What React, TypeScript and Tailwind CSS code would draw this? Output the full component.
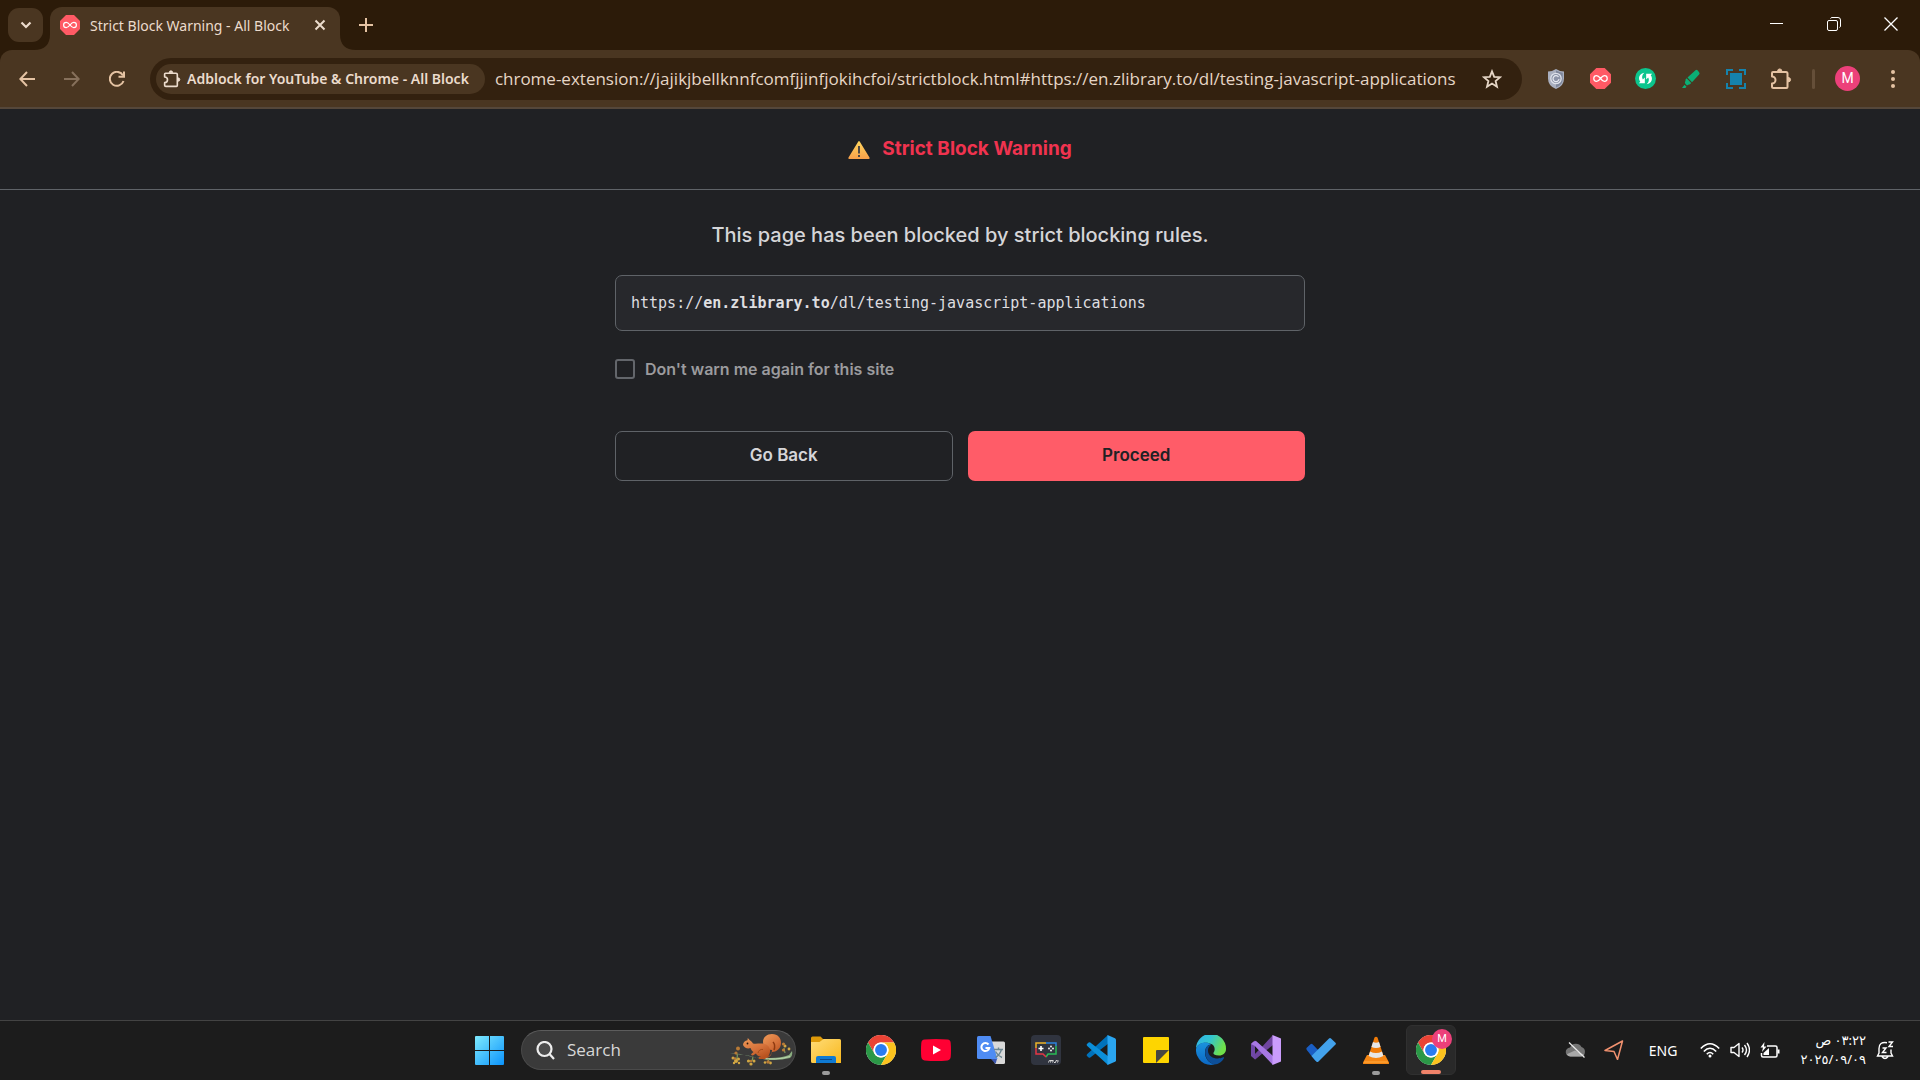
import type { ReactNode } from "react";

const icon = "block shrink-0";

function StopSign({ className }: { className: string }) {
  return (
    <svg viewBox="0 0 20 20" className={`${icon} ${className}`} aria-hidden="true">
      <path d="M6 0h8l6 6v8l-6 6H6l-6-6V6z" fill="#ff5a65" />
      <path
        d="M10 10C8.600 8.200 7.700 7.300 6.300 7.300a2.700 2.700 0 0 0 0 5.400c1.400 0 2.300-.9 3.700-2.700s2.300-2.700 3.700-2.700a2.700 2.700 0 0 1 0 5.400c-1.400 0-2.300-.9-3.700-2.700z"
        fill="none"
        stroke="#fff"
        strokeWidth="1.200"
      />
    </svg>
  );
}

function Puzzle({ className }: { className: string }) {
  return (
    <svg viewBox="0 0 22 22" className={`${icon} ${className}`} fill="none" stroke="currentColor" strokeWidth="2" strokeLinejoin="round" aria-hidden="true">
      <path d="M3 4h13q1.500 0 1.500 1.500V19q0 1-1 1H3.500Q2 20 2 18.500v-3a3.300 3.300 0 0 0 0-7V5q0-1 1-1z" />
      <path d="M7.500 3.500a2.200 2.600 0 0 1 4.400 0zM18 9.500a2.600 2.200 0 0 1 0 4.400z" fill="currentColor" strokeWidth="1" />
    </svg>
  );
}

function ChromeLogo() {
  return (
    <svg viewBox="0 0 48 48" className={`${icon} size-[30px]`} aria-hidden="true">
      <circle cx="24" cy="24" r="24" fill="#fff" />
      <path d="M3.200 12A24 24 0 0 1 44.800 12H24a12 12 0 0 0-10.400 18z" fill="#ea4335" />
      <path d="M3.200 12A24 24 0 0 0 24 48l10.400-18a12 12 0 0 1-20.800 0z" fill="#2b9847" />
      <path d="M44.800 12A24 24 0 0 1 24 48l10.400-18A12 12 0 0 0 24 12z" fill="#fcc31e" />
      <circle cx="24" cy="24" r="12" fill="#fff" />
      <circle cx="24" cy="24" r="9.500" fill="#2a7cf0" />
    </svg>
  );
}

function Squirrel() {
  return (
    <svg viewBox="0 0 64 34" className="block h-[34px] w-16" aria-hidden="true">
      <defs>
        <linearGradient id="fur" x1="0" y1="0" x2="0.600" y2="1">
          <stop offset="0" stopColor="#ee9a58" />
          <stop offset="0.600" stopColor="#d5713a" />
          <stop offset="1" stopColor="#b9531f" />
        </linearGradient>
      </defs>
      <path d="M1 20.500q9-.5 17 2t20 2.500q14 .5 22-3l3-4q1 5-2 7-12 3-24 1.500-12-2.500-20-4.500-8-1-16-1.500z" fill="#8aae80" />
      <path d="M30 25q18 2.500 31-1.500" stroke="#b9d3ac" strokeWidth="1" fill="none" />
      <path d="M8 21q1 3-1 6M24 24l-1 4M39 26l1 3M56 20l-1-5" stroke="#7d9a5a" strokeWidth="1.200" fill="none" />
      <path d="M35 25c5-1 8-3 8-8-5 0-9-3-9-8 0-5 4-8 9-8 6 0 9 4 9 9 0 6-5 9-9 9-1 4-3 6-7 6z" fill="url(#fur)" />
      <path d="M45 17c1-3 1-6-1-8" stroke="#8f3a10" strokeWidth="1.500" fill="none" />
      <path d="M14 12c0-2.500 2-4.500 4.500-4.800L18.800 5l2 2.200c1.700.8 2.300 2 3.200 3.300 4 1 10-1.500 14.500 2 3.500 2.500 3 7.500 1 10.500L36 26h-6c-1-1 0-2 2-2.300-3-.2-4.500-1.700-5-3.200-1.500.5-2 2-4 2l-1-1.200 2.500-2.300c-1.500-1-2.500-2.500-3-4-3 1.200-6.500-.5-7.500-3z" fill="url(#fur)" />
      <path d="M29 20q1-4 5-3.500" stroke="#a54b19" strokeWidth="1" fill="none" />
      <circle cx="18.500" cy="10.500" r="0.900" fill="#2a1509" />
      <g fill="#d2a743">
        <circle cx="4" cy="25" r="1.500" /><circle cx="7" cy="28" r="2" /><circle cx="9.500" cy="26" r="1.500" /><circle cx="5" cy="30" r="1.200" /><circle cx="10" cy="30" r="1.200" />
        <circle cx="19.500" cy="28" r="1.600" /><circle cx="22" cy="31" r="1.600" /><circle cx="25" cy="28" r="1.500" />
        <circle cx="36" cy="29.500" r="1.300" /><circle cx="41.500" cy="30" r="1.400" />
        <circle cx="56" cy="13" r="1.500" /><circle cx="60" cy="16" r="1.400" />
      </g>
      <g fill="#b87a36">
        <circle cx="9" cy="15.500" r="2" /><circle cx="7" cy="20" r="1.600" /><circle cx="6" cy="25.500" r="1.300" /><circle cx="22" cy="28" r="1.200" />
        <circle cx="39" cy="29" r="1.700" /><circle cx="54.500" cy="11" r="1.600" /><circle cx="54.500" cy="17" r="1.600" />
      </g>
    </svg>
  );
}

function Task({ label, children, running, active }: { label: string; children: ReactNode; running?: boolean; active?: boolean }) {
  return (
    <button
      aria-label={label}
      className={
        active
          ? "relative flex size-[50px] items-center justify-center rounded-md border border-[#303030] bg-[#292929]"
          : "relative flex size-[50px] items-center justify-center rounded-md"
      }
    >
      {children}
      {running && <span className="absolute bottom-0 left-1/2 h-1 w-2 -translate-x-1/2 rounded-full bg-[#9a9a9a]" />}
      {active && <span className="absolute bottom-0 left-1/2 h-1 w-5 -translate-x-1/2 rounded-full bg-[#f0836a]" />}
    </button>
  );
}

function TabStrip() {
  return (
    <div className="flex h-[50px] text-[#ecdccd]">
      <button aria-label="Search tabs" className="mt-2 ml-2 flex h-[34px] w-[35px] items-center justify-center rounded-[11px] bg-[#4a3621]">
        <svg viewBox="0 0 12 8" className="h-2 w-3" fill="none" stroke="currentColor" strokeWidth="2.200" aria-hidden="true">
          <path d="M1.500 1.500 6 6l4.500-4.500" />
        </svg>
      </button>
      <div className="relative mt-[7px] ml-[7px] flex h-[43px] w-[290px] items-center rounded-t-xl bg-[#4a3621] pr-[13px] pb-[7px] pl-2.5">
        <svg viewBox="0 0 16 16" className="absolute bottom-0 -left-4 size-4" aria-hidden="true"><path d="M16 0v16H0Q16 16 16 0z" fill="#4a3621" /></svg>
        <svg viewBox="0 0 16 16" className="absolute -right-4 bottom-0 size-4" aria-hidden="true"><path d="M0 0v16h16Q0 16 0 0z" fill="#4a3621" /></svg>
        <StopSign className="size-5" />
        <span className="ml-2.5 flex-1 whitespace-nowrap text-[14px]">Strict Block Warning - All Block</span>
        <button aria-label="Close tab" className="flex size-[14px] items-center justify-center">
          <svg viewBox="0 0 12 12" className="size-3" stroke="currentColor" strokeWidth="2" aria-hidden="true">
            <path d="m1.500 1.500 9 9m0-9-9 9" />
          </svg>
        </button>
      </div>
      <button aria-label="New tab" className="ml-4 flex w-5 items-center justify-center text-[#e5c3a3]">
        <svg viewBox="0 0 14 14" className="size-[14px]" stroke="currentColor" strokeWidth="2" aria-hidden="true">
          <path d="M7 0v14M0 7h14" />
        </svg>
      </button>
      <div className="ml-auto flex h-12 pr-px text-white">
        <button aria-label="Minimize" className="flex w-[57px] items-center justify-center">
          <svg viewBox="0 0 14 14" className="size-[14px]" stroke="currentColor" aria-hidden="true"><path d="M0 6.500h13" /></svg>
        </button>
        <button aria-label="Restore" className="flex w-[57px] items-center justify-center">
          <svg viewBox="0 0 14 14" className="size-[14px]" fill="none" stroke="currentColor" aria-hidden="true">
            <rect x="0.500" y="3.500" width="10" height="10" rx="1.500" />
            <path d="M3.500 1.500q.5-1 1.500-1h6q2.500 0 2.500 2.500v6q0 1-1 1.500" />
          </svg>
        </button>
        <button aria-label="Close" className="flex w-[57px] items-center justify-center">
          <svg viewBox="0 0 14 14" className="size-[14px]" stroke="currentColor" strokeWidth="1.300" aria-hidden="true"><path d="m.5.5 13 13m0-13-13 13" /></svg>
        </button>
      </div>
    </div>
  );
}

const navButton = "flex w-[45px] shrink-0 items-center justify-center";

function Toolbar() {
  return (
    <div className="flex h-[59px] items-center rounded-t-xl border-b-2 border-[#55473a] bg-[#4a3621] pl-1 text-[#e5c3a3]">
      <button aria-label="Back" className={navButton}>
        <svg viewBox="0 0 16 16" className="size-4" fill="none" stroke="currentColor" strokeWidth="2" aria-hidden="true"><path d="M16 8H1.500M8 1 1.300 8 8 15" /></svg>
      </button>
      <button aria-label="Forward" className={`${navButton} text-[#86705b]`}>
        <svg viewBox="0 0 16 16" className="size-4" fill="none" stroke="currentColor" strokeWidth="2" aria-hidden="true"><path d="M0 8h14.500M8 1l6.700 7L8 15" /></svg>
      </button>
      <button aria-label="Reload" className={navButton}>
        <svg viewBox="0 0 16 16" className="size-4" fill="none" stroke="currentColor" strokeWidth="2" aria-hidden="true">
          <path d="M14.500 10A7 7 0 1 1 14 4.500" /><path d="M15 .5v5.300H9.500" />
        </svg>
      </button>
      <div className="ml-[11px] flex h-[42px] min-w-0 flex-1 items-center rounded-full bg-[#33210f] pr-5 pl-1.5 text-[#e6d6c6]">
        <button className="flex h-[30px] shrink-0 items-center gap-1.5 rounded-full bg-[#4a3621] pr-4 pl-[7px] text-[14px] font-semibold whitespace-nowrap text-[#ecdccd]">
          <Puzzle className="size-[18px]" />
          Adblock for YouTube &amp; Chrome - All Block
        </button>
        <input
          aria-label="Address"
          className="ml-2.5 min-w-0 flex-1 bg-transparent font-['Open_Sans',sans-serif] text-[17px] outline-none"
          defaultValue="chrome-extension://jajikjbellknnfcomfjjinfjokihcfoi/strictblock.html#https://en.zlibrary.to/dl/testing-javascript-applications"
        />
        <button aria-label="Bookmark">
          <svg viewBox="0 0 20 20" className="size-5" fill="none" stroke="currentColor" strokeWidth="1.800" aria-hidden="true">
            <path d="m10 2.300 2.200 5.500 5.900.4-4.500 3.800 1.400 5.700-5-3.100-5 3.100L6.400 12 1.900 8.200l5.900-.4z" />
          </svg>
        </button>
      </div>
      <div className="ml-[11px] flex items-center">
        <button aria-label="Shield" className={navButton}>
          <svg viewBox="0 0 18 20" className="h-5 w-[18px]" aria-hidden="true">
            <path d="M9 0q4 2.500 8 2.500v7Q17 17 9 20 1 17 1 9.500v-7Q5 2.500 9 0z" fill="#a9afbf" />
            <path d="M9 1.500q3.500 2 6.800 2.200v6Q15.800 16 9 18.600z" fill="#7f879b" />
            <circle cx="9" cy="9.500" r="5.200" fill="#8d94a8" stroke="#dfe2ea" strokeWidth="1.300" />
            <path d="M11.500 8A3 3 0 1 0 12 10" fill="none" stroke="#e8ebf2" strokeWidth="1.200" />
          </svg>
        </button>
        <button aria-label="All Block" className={navButton}><StopSign className="size-[21px]" /></button>
        <button aria-label="Sync" className={navButton}>
          <svg viewBox="0 0 22 22" className="size-[21px]" aria-hidden="true">
            <circle cx="11" cy="11" r="11" fill="#0cc58d" />
            <path d="M9.800 5C4.500 5.500 2.800 11 5.500 14.300L4 16h6.300v-6L8.200 12C6.800 10 7.500 6.800 9.800 5z" fill="#fff" />
            <path d="M12.200 17c5.300-.5 7-6 4.300-9.300L18 6h-6.300v6l2.100-2c1.400 2 .7 5.200-1.600 7z" fill="#fff" />
          </svg>
        </button>
        <button aria-label="Highlighter" className={navButton}>
          <svg viewBox="0 0 20 20" className="size-5" fill="#0bae75" aria-hidden="true">
            <path d="M14.500 1.200q1-1 2 0l1.600 2q1 1.200 0 2.300L11 13.300 6.500 8.500z" />
            <path d="m5.700 9.300 4.500 4.800-1.200 1.200q-2 .2-3 1.200l-1.500-1.600q-1-1.200-.5-1.800.8-1.400.5-2.600zM3.500 15.800l2 2L4.300 19H1z" />
          </svg>
        </button>
        <button aria-label="Capture" className={navButton}>
          <svg viewBox="0 0 20 20" className="size-5" aria-hidden="true">
            <rect x="4" y="4" width="12" height="12" fill="#1583ad" />
            <path d="M1 6V1h6M13 1h6v5M19 14v5h-6M7 19H1v-5" fill="none" stroke="#1583ad" strokeWidth="2" />
          </svg>
        </button>
        <button aria-label="Extensions" className={navButton}><Puzzle className="size-[22px]" /></button>
        <span className="mr-2 ml-[9px] h-5 w-[3px] rounded-full bg-[#654f39]" />
        <button aria-label="Profile" className={`${navButton} ml-0.5`}>
          <span className="flex size-[25px] items-center justify-center rounded-full bg-[#ec407a] font-[Roboto] text-[14px] text-white">M</span>
        </button>
        <button aria-label="Menu" className={navButton}>
          <svg viewBox="0 0 4 18" className="h-[18px] w-1" fill="currentColor" aria-hidden="true">
            <circle cx="2" cy="2" r="2" /><circle cx="2" cy="9" r="2" /><circle cx="2" cy="16" r="2" />
          </svg>
        </button>
        <span className="w-[5px]" />
      </div>
    </div>
  );
}

function Page() {
  return (
    <main className="flex-1 bg-[#202124] font-[Inter,sans-serif]">
      <header className="flex h-[81px] items-center justify-center gap-3 border-b border-[#5f6368]">
        <svg viewBox="0 0 22 20" className="mt-0.5 h-5 w-[22px]" aria-hidden="true">
          <defs>
            <linearGradient id="warn" x1="0" y1="0" x2="0" y2="1">
              <stop offset="0" stopColor="#ffd75e" /><stop offset="1" stopColor="#f9a04a" />
            </linearGradient>
          </defs>
          <path d="M10.300 1.500q.7-1.200 1.400 0l9.800 16q.6 1.500-.9 1.500H1.400Q-.1 19 .5 17.500z" fill="url(#warn)" />
          <path d="M11 6v7.500M11 15v2" stroke="#3d3d44" strokeWidth="1.800" />
        </svg>
        <h1 className="text-[19px] font-bold text-[#f0334f]">Strict Block Warning</h1>
      </header>
      <section className="mx-auto w-full max-w-[690px] pt-[30px]">
        <h2 className="text-center text-[20px] leading-[30px] font-medium text-[#d5d5d8]">This page has been blocked by strict blocking rules.</h2>
        <p className="mt-[25px] flex h-14 items-center rounded-[7px] border border-[#5f6368] bg-[#27282c] px-[15px] font-['DejaVu_Sans_Mono',monospace] text-[15px] text-[#dedee0]">
          https://<b>en.zlibrary.to</b>/dl/testing-javascript-applications
        </p>
        <label className="mt-7 flex items-center gap-2.5 text-[16px] leading-5 font-semibold text-[#9b9b9e]">
          <input type="checkbox" className="size-5 appearance-none rounded-[3px] border-2 border-[#63666b]" />
          Don&#39;t warn me again for this site
        </label>
        <div className="mt-[52px] grid grid-cols-2 gap-[15px] text-[17px] font-semibold">
          <button className="h-[50px] rounded-[7px] border border-[#5f6368] text-[#d5d5d8]">Go Back</button>
          <button className="h-[50px] rounded-[7px] bg-[#ff5c68] text-[#202124]">Proceed</button>
        </div>
      </section>
    </main>
  );
}

function Taskbar() {
  return (
    <footer className="grid h-[60px] grid-cols-[1fr_auto_1fr] items-center border-t border-[#434343] bg-[#1c1c1c] pb-px text-white">
      <span />
      <nav aria-label="Taskbar" className="flex items-center gap-[5px]">
        <Task label="Start">
          <svg viewBox="0 0 29 29" className={`${icon} size-[29px]`} aria-hidden="true">
            <defs>
              <linearGradient id="win" x1="0" y1="0" x2="1" y2="1" >
                <stop offset="0" stopColor="#7eeafe" /><stop offset="1" stopColor="#0b93fb" />
              </linearGradient>
              <mask id="panes">
                <path d="M1 0h13v14H0V1q0-1 1-1zM15 0h13q1 0 1 1v13H15zM0 15h14v14H1q-1 0-1-1zM15 15h14v13q0 1-1 1H15z" fill="#fff" />
              </mask>
            </defs>
            <rect width="29" height="29" fill="url(#win)" mask="url(#panes)" />
          </svg>
        </Task>
        <div className="ml-0.5 flex h-10 w-[275px] items-center rounded-full border border-[#4a4a4a] border-t-[#5c5c5c] bg-[#3a3a3a] pr-0.5 pl-3.5">
          <svg viewBox="0 0 19 19" className="size-[19px]" fill="none" stroke="#ededed" strokeWidth="2.200" aria-hidden="true">
            <circle cx="8.500" cy="8" r="7" fill="#4c4c4c" /><path d="m13.500 13 4.500 5" />
          </svg>
          <input aria-label="Search" placeholder="Search" className="ml-3 min-w-0 flex-1 bg-transparent font-['Open_Sans',sans-serif] text-[17px] outline-none placeholder:text-[#d8d8d8]" />
          <Squirrel />
        </div>
        <Task label="File Explorer" running>
          <svg viewBox="0 0 30 28" className={`${icon} h-7 w-[30px]`} aria-hidden="true">
            <defs>
              <linearGradient id="folder" x1="0" y1="0" x2="1" y2="1"><stop offset="0" stopColor="#ffdc77" /><stop offset="1" stopColor="#f9b81d" /></linearGradient>
            </defs>
            <path d="M0 2q0-1.500 1.500-1.500h8L13 4l-4 4H0z" fill="#de9a09" />
            <path d="M0 6h8.500l4-3H28.500Q30 3 30 4.500V27H1.500Q0 27 0 25.500z" fill="url(#folder)" />
            <path d="M5 27v-5q0-2 2-2h16q2 0 2 2v5z" fill="#0f7ad3" />
            <path d="M9 23.500h12" stroke="#0b4a8d" />
          </svg>
        </Task>
        <Task label="Chrome"><ChromeLogo /></Task>
        <Task label="YouTube">
          <svg viewBox="0 0 30 22" className={`${icon} h-[22px] w-[30px]`} aria-hidden="true">
            <path d="M3.500.6Q15-.5 26.500.6 29.500 1 29.700 4q.6 7 0 14-.3 3-3.200 3.400-11.500 1.100-23 0Q.6 21 .3 18q-.6-7 0-14Q.6 1 3.500.6z" fill="#ff0033" />
            <path d="m12 6.500 8 4.500-8 4.500z" fill="#fff" />
          </svg>
        </Task>
        <Task label="Translate">
          <svg viewBox="0 0 28 28" className={`${icon} size-7`} aria-hidden="true">
            <path d="M11 5.500h15.500q1.500 0 1.500 1.500v19.500q0 1.500-1.500 1.500H18z" fill="#d9d9d9" />
            <path d="m14 23 4.500 5 1.500-5z" fill="#3a55b0" />
            <path d="M1.500 0h12L20.500 23h-19Q0 23 0 21.500v-20Q0 0 1.500 0z" fill="#4f8cf3" />
            <path d="M11.500 8.500a4 4 0 1 0 .8 3.500H8.500" fill="none" stroke="#fff" strokeWidth="2" />
            <path d="M17 13.500h9M21.500 11.500v2M24.500 13.500q-1.500 5-6 8M18.500 15.500q2 4 6.500 6" fill="none" stroke="#6c8792" strokeWidth="1.400" />
          </svg>
        </Task>
        <Task label="MSI">
          <svg viewBox="0 0 30 30" className={`${icon} size-[30px]`} fill="none" aria-hidden="true">
            <rect width="30" height="30" rx="4" fill="#30343f" />
            <path d="M5 13V8h10" stroke="#edb42a" strokeWidth="1.500" /><path d="M15 8h10v3" stroke="#2d83dd" strokeWidth="1.500" />
            <path d="M25 11v8h-4" stroke="#29ba57" strokeWidth="1.500" /><path d="M21 19h-4l-2 3" stroke="#29ba57" strokeWidth="1.500" />
            <path d="M5 13v6h7l3 3" stroke="#e33646" strokeWidth="1.500" />
            <path d="M10 11v5M7.500 13.500h5" stroke="#fff" strokeWidth="1.600" />
            <g fill="#fff"><circle cx="20" cy="11.500" r=".9" /><circle cx="20" cy="15.500" r=".9" /><circle cx="18" cy="13.500" r=".9" /><circle cx="22" cy="13.500" r=".9" /></g>
            <path d="m17.500 27.500.8-2h4l-.7 2m-1.500-2-.6 2M23 27.500h1.500l.6-2h1.500M26.500 27.500l.8-2" stroke="#d8d8d8" />
          </svg>
        </Task>
        <Task label="Visual Studio Code">
          <svg viewBox="0 0 30 30" className={`${icon} size-[30px]`} aria-hidden="true">
            <path d="M22 0 1 19.300q-.8.900 0 1.700l1.600 1.500q.8.700 1.700 0L23 8z" fill="#0072bb" />
            <path d="M22 30 1 10.700q-.8-.9 0-1.700l1.600-1.500q.8-.7 1.700 0L23 22z" fill="#0b8ed8" />
            <path d="M21.500 30V0l7.500 3.200q1 .5 1 1.600v20.400q0 1.100-1 1.600z" fill="#2aa5f0" />
          </svg>
        </Task>
        <Task label="Sticky Notes">
          <svg viewBox="0 0 26 26" className={`${icon} size-[26px]`} aria-hidden="true">
            <rect width="26" height="26" rx="1" fill="#fed500" />
            <path d="M26 13 13 26V14q0-1 1-1z" fill="#484641" />
          </svg>
        </Task>
        <Task label="Edge">
          <svg viewBox="0 0 30 30" className={`${icon} size-[30px]`} aria-hidden="true">
            <defs>
              <linearGradient id="edgeTop" x1="0" y1="0" x2="1" y2=".4"><stop offset="0" stopColor="#2fb1ec" /><stop offset=".5" stopColor="#33c5cf" /><stop offset="1" stopColor="#6fe04a" /></linearGradient>
              <linearGradient id="edgeLow" x1="0" y1="0" x2="0" y2="1"><stop offset="0" stopColor="#1a92de" /><stop offset="1" stopColor="#0c68c4" /></linearGradient>
            </defs>
            <path d="M0 13.500A15 15 0 0 1 30 14c0 4-3 6.500-7 6.500-4.500 0-6-1.500-5.500-2.700 1.500-2 2-6-1.500-8.500C10 6 2 8 0 13.500z" fill="url(#edgeTop)" />
            <path d="M0 14C1.500 8 9.500 5.500 15 9.500c-3 0-6 3-6 8 0 6 4 10.500 9.500 12A15 15 0 0 1 0 14z" fill="url(#edgeLow)" />
            <path d="M12 10.500C7 14 8.500 27 18.500 29.500c4 0 8-3 9.500-6.500.3-.8-.3-1-1-.7-5 2.700-15 1-15-6.800 0-2 .8-4 3-5.800z" fill="#0d4f99" />
          </svg>
        </Task>
        <Task label="Visual Studio">
          <svg viewBox="0 0 30 30" className={`${icon} size-[30px]`} aria-hidden="true">
            <path d="M0 9v12l4 3.500L9 20V10L4 5.500zM4 11l4 4-4 4z" fillRule="evenodd" fill="#7048a8" />
            <path d="m22 0-18 19.500v5L22 10z" fill="#6f459f" />
            <path d="M0 9q2-3 5-3l17 15v9L4 11z" fill="#a778e4" />
            <path d="m21.500 0 8.500 3.500v23L21.500 30z" fill="#ca9cfb" />
          </svg>
        </Task>
        <Task label="To Do">
          <svg viewBox="0 0 30 24" className={`${icon} h-6 w-[30px]`} aria-hidden="true">
            <path d="m1 9.500 3.500-3.300q1-.8 2 0L15 15l-5.500 8L.8 12q-1-1.500.2-2.500z" fill="#1a5ec4" />
            <path d="M23 .5q1-1 2 0l4.500 4.300q.8.900 0 1.700L12.500 23.500q-1.200 1-2.200 0L5.500 18z" fill="#43a2ec" />
          </svg>
        </Task>
        <Task label="VLC" running>
          <svg viewBox="0 0 26 29" className={`${icon} h-[29px] w-[26px]`} aria-hidden="true">
            <path d="M4 19h18l4 7.500q.5 1.500-1 1.500H1Q-.5 28 0 26.500z" fill="#f58613" />
            <path d="M1 26h24" stroke="#ffad42" />
            <path d="M11.500 1.500q1.500-1.500 3 0L20.500 20q-7.500 4-15 0z" fill="#f07b08" />
            <path d="m10 6-1.600 5q4.600 2 9.200 0L16 6q-3 1.500-6 0zM7 15.500 5.600 20q7.400 4 14.800 0L19 15.500q-6 3-12 0z" fill="#e6e6e6" />
          </svg>
        </Task>
        <Task label="Chrome profile M" active>
          <ChromeLogo />
          <span className="absolute top-[3px] right-[3px] flex size-5 items-center justify-center rounded-full bg-[#ec407a] font-[Roboto] text-[11px] text-white">M</span>
        </Task>
      </nav>
      <div className="flex items-center justify-end pr-[26px]">
        <svg viewBox="0 0 22 18" className="mr-[17px] h-[18px] w-[22px]" aria-hidden="true">
          <path d="M5.500 15.500a4.500 4.500 0 0 1-.5-9A6.500 6.500 0 0 1 16.500 6a5 5 0 0 1 0 9.500z" fill="#747474" />
          <path d="M5.500 15.500a4.500 4.500 0 0 1-3.800-2.200L10 9.500l9.500 4.500-3 1.500z" fill="#a8a8a8" />
          <path d="m4 1.500 15.500 15" stroke="#e8e8e8" strokeWidth="1.300" />
        </svg>
        <svg viewBox="0 0 20 20" className="mr-[25px] size-5" fill="none" stroke="#f2916f" strokeWidth="1.500" strokeLinejoin="round" aria-hidden="true">
          <path d="M18.500 1 1 10.500l9 1 3.500 8z" />
        </svg>
        <span className="mr-[23px] text-[14px]">ENG</span>
        <button aria-label="Network, sound and battery" className="flex items-center gap-2.5">
          <svg viewBox="0 0 20 16" className="h-4 w-5" fill="none" stroke="#fff" strokeWidth="1.600" aria-hidden="true">
            <path d="M.8 6.500q9.200-9.500 18.400 0M3.800 9.500q6.200-6.500 12.400 0M6.800 12.200q3.200-3.500 6.400 0" />
            <circle cx="10" cy="14" r="1.500" fill="#fff" stroke="none" />
          </svg>
          <svg viewBox="0 0 20 16" className="h-4 w-5" fill="none" stroke="#fff" strokeWidth="1.400" strokeLinejoin="round" aria-hidden="true">
            <path d="M1 5.500h3L9 1.500v13L4 10.500H1zM12 5.500q2 2.500 0 5M14.500 3q4 5 0 10M17 1q5 7 0 14" />
          </svg>
          <svg viewBox="0 0 20 17" className="h-[17px] w-5" fill="none" stroke="#fff" strokeWidth="1.500" aria-hidden="true">
            <path d="M7 4h8.500q1.500 0 1.500 1.500v8q0 1.500-1.500 1.500H3q-1.500 0-1.500-1.500V11" /><path d="M18.500 7.500v4" strokeWidth="2" />
            <path d="M3.500 13v-2L9 6v7z" fill="#fff" stroke="none" /><path d="M4.500 0 .5 5.500H3L2 10l4.500-5.500H4z" fill="#fff" stroke="none" />
          </svg>
        </button>
        <button dir="rtl" className="ml-5 text-start font-['Noto_Sans','DejaVu_Sans',sans-serif] text-[13px] leading-[19px]">
          <span className="block">٠٣:٢٢ ص</span>
          <span className="block">٢٠٢٥/٠٩/٠٩</span>
        </button>
        <svg viewBox="0 0 18 20" className="ml-[10px] h-5 w-[18px]" fill="none" stroke="#fff" strokeWidth="1.400" aria-hidden="true">
          <path d="M11 2.700Q3 1.500 3 8.500V13l-1.500 3h15L15 13V9.500M6 16.500q3 4 6 0" /><path d="M6.500 8h3.500l-3.500 4.500h4M12.500 2h4L13 6.500h4" />
        </svg>
      </div>
    </footer>
  );
}

export default function App() {
  return (
    <div className="flex min-h-screen flex-col bg-[#2c1b09] font-['Noto_Sans','Open_Sans',sans-serif]">
      <TabStrip />
      <Toolbar />
      <Page />
      <Taskbar />
    </div>
  );
}
